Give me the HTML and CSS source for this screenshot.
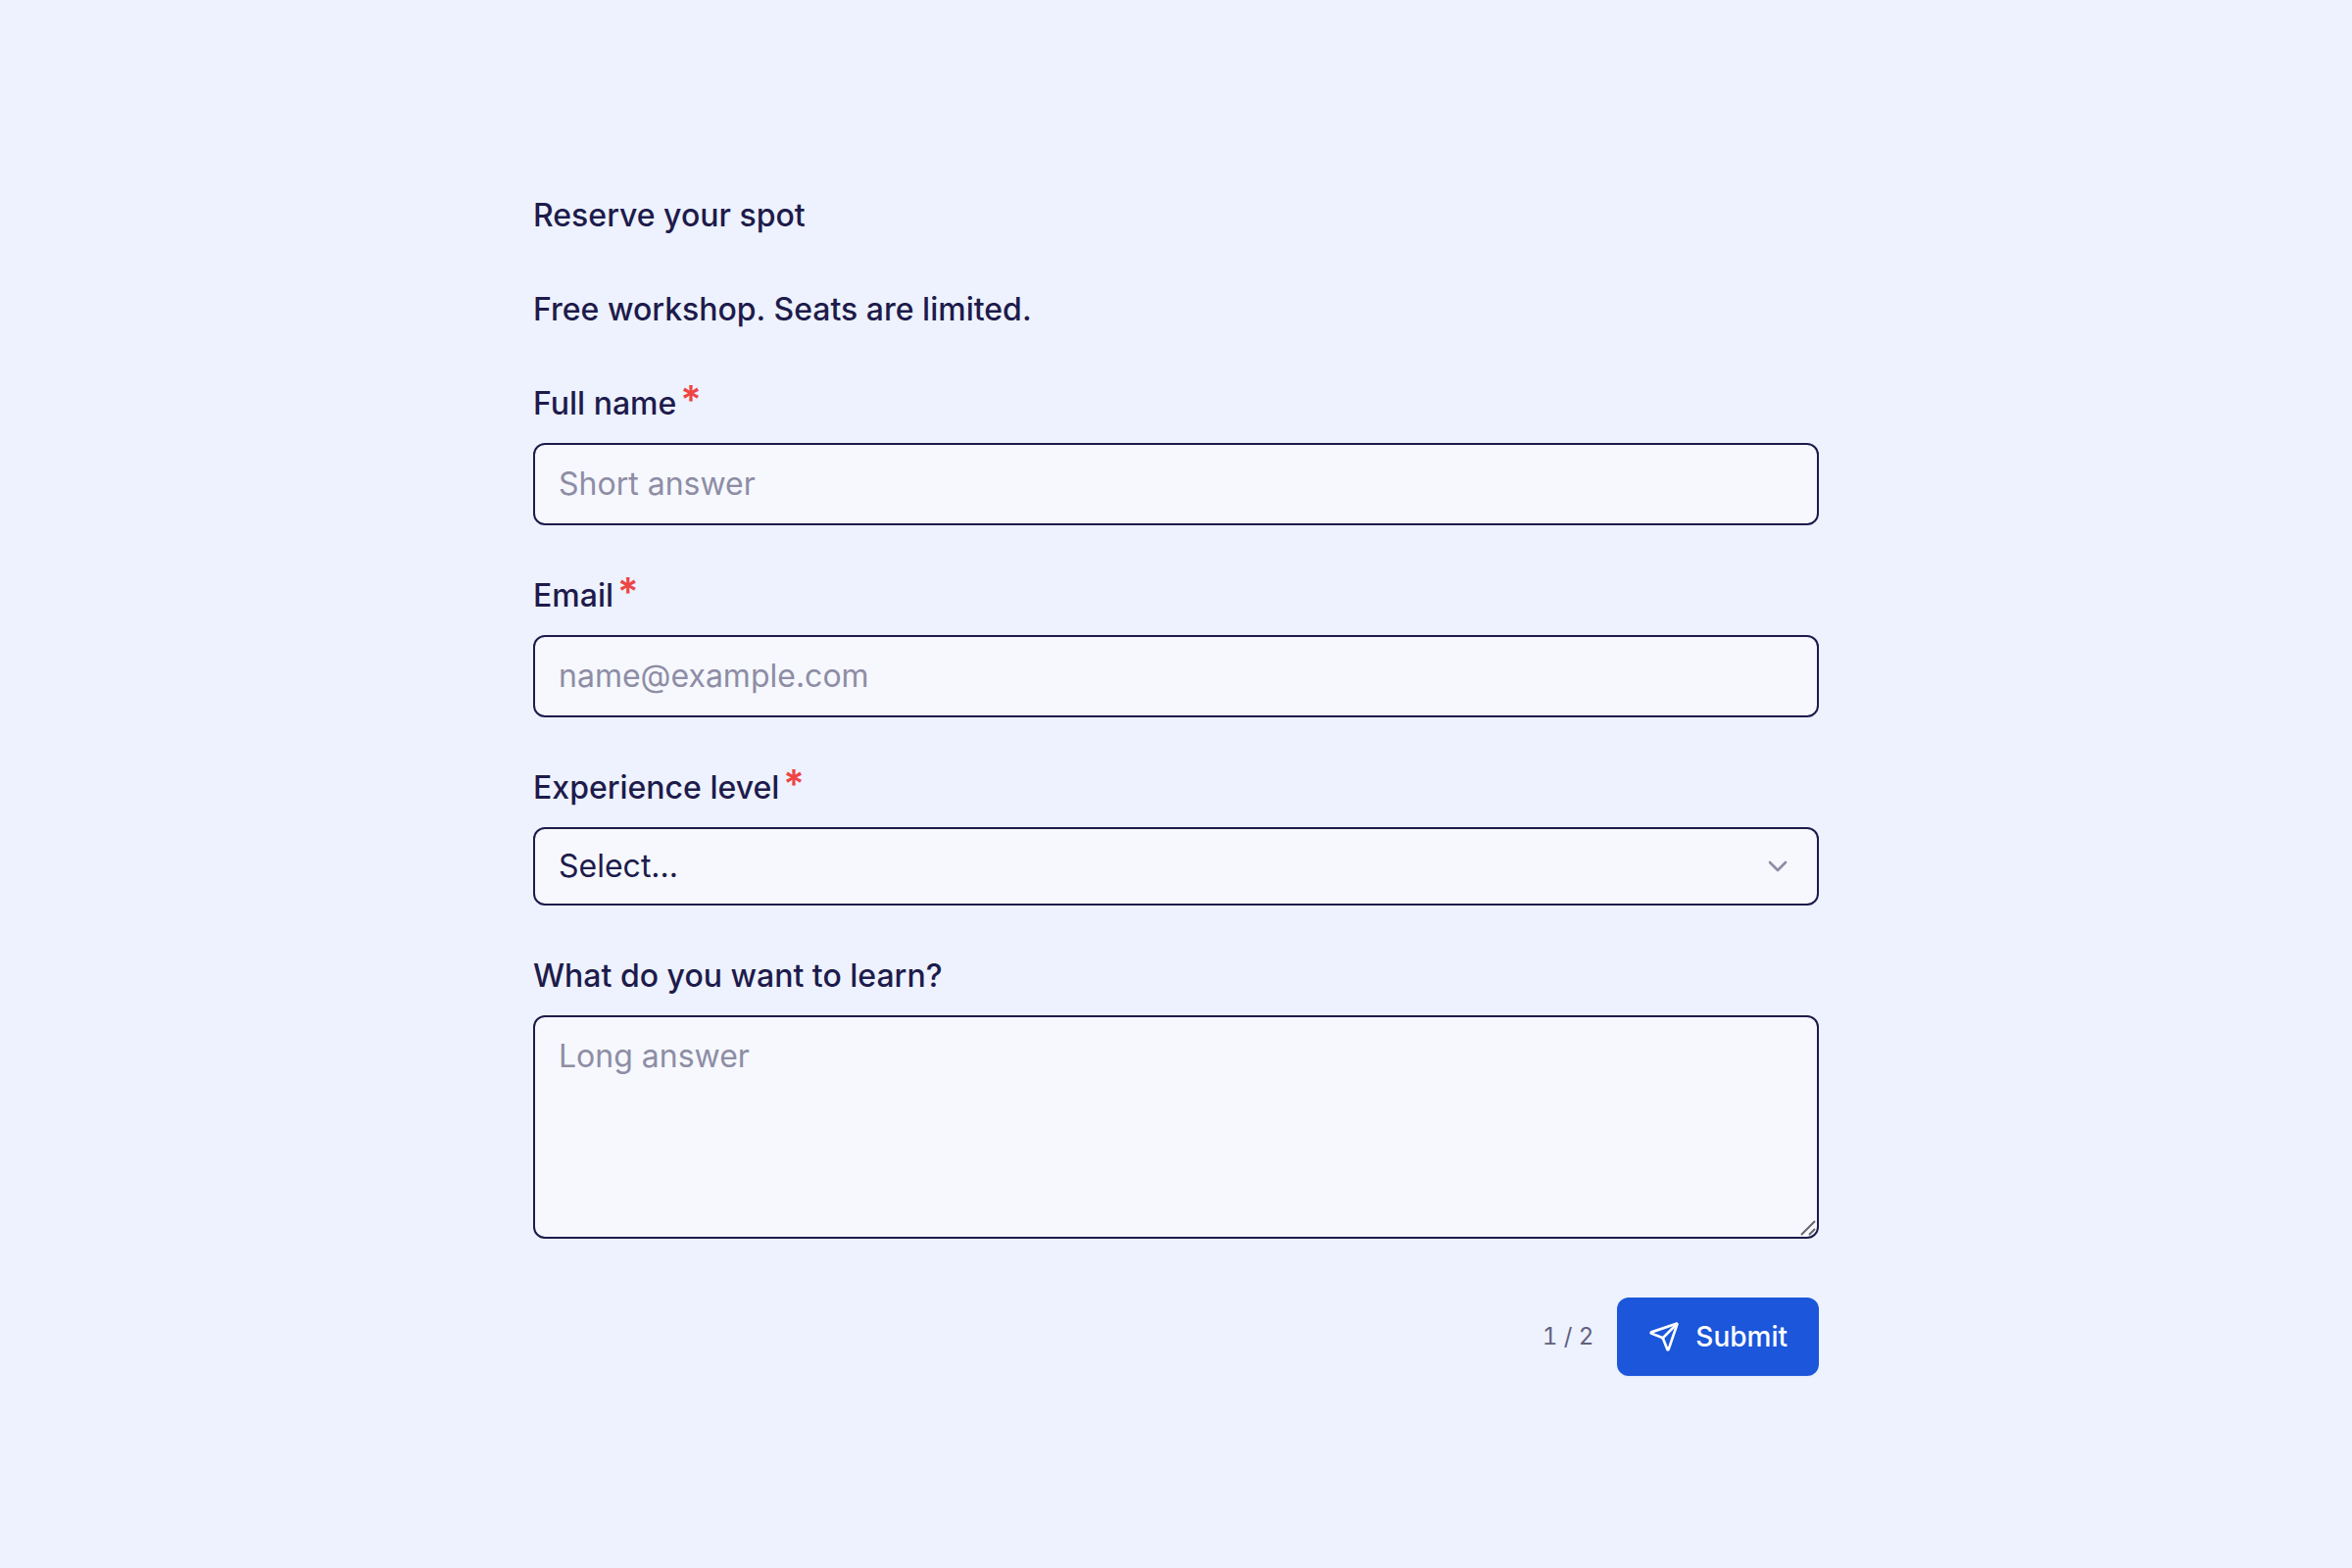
FILE: index.html
```html
<!DOCTYPE html>
<html lang="en">
<head>
<meta charset="utf-8">
<meta name="viewport" content="width=device-width, initial-scale=1">
<title>Reserve your spot</title>
<link rel="stylesheet" href="styles.css">
</head>
<body>
<main class="page">
  <form class="form">
    <h1 class="text">Reserve your spot</h1>
    <p class="text">Free workshop. Seats are limited.</p>
    <div class="field">
      <label class="label" for="name">Full name<span class="required">*</span></label>
      <input class="control" id="name" type="text" placeholder="Short answer" required>
    </div>
    <div class="field">
      <label class="label" for="email">Email<span class="required">*</span></label>
      <input class="control" id="email" type="email" placeholder="name@example.com" required>
    </div>
    <div class="field">
      <label class="label" for="level">Experience level<span class="required">*</span></label>
      <div class="control-wrap">
        <select class="control select" id="level" required>
          <option value="">Select...</option>
          <option>Beginner</option>
          <option>Intermediate</option>
          <option>Advanced</option>
        </select>
        <svg class="chevron" viewBox="0 0 24 24" aria-hidden="true"><path d="m6 9 6 6 6-6"/></svg>
      </div>
    </div>
    <div class="field">
      <label class="label" for="learn">What do you want to learn?</label>
      <div class="control-wrap">
        <textarea class="control textarea" id="learn" placeholder="Long answer"></textarea>
        <svg class="grip" viewBox="0 0 18 18" aria-hidden="true"><path d="M2 16 16 2M10 16l6-6"/></svg>
      </div>
    </div>
    <div class="actions">
      <span class="progress">1 / 2</span>
      <button class="submit" type="submit">
        <svg class="send" viewBox="0 0 24 24" aria-hidden="true"><path d="M14.536 21.686a.5.5 0 0 0 .937-.024l6.5-19a.496.496 0 0 0-.635-.635l-19 6.5a.5.5 0 0 0-.024.937l7.93 3.18a2 2 0 0 1 1.112 1.11z"/><path d="m21.854 2.147-10.94 10.939"/></svg>
        Submit
      </button>
    </div>
  </form>
</main>
</body>
</html>
```

FILE: styles.css
```css
*,
*::before,
*::after {
  box-sizing: border-box;
}

body {
  margin: 0;
  background: #edf2fe;
  color: #1e1b4b;
  font: 500 32px/48px Inter, "Liberation Sans", sans-serif;
}

.page {
  display: flex;
  align-items: center;
  justify-content: center;
  min-height: 100vh;
  padding: 48px;
}

.form {
  display: flex;
  flex-direction: column;
  gap: 48px;
  width: 100%;
  max-width: 1312px;
}

.text {
  margin: 0;
  font: inherit;
}

.field {
  display: flex;
  flex-direction: column;
  gap: 16px;
}

.label {
  display: flex;
  align-items: flex-start;
  gap: 4px;
}

.required {
  color: #ef4444;
  font-size: 40px;
  font-weight: 600;
  line-height: 40px;
}

.control {
  display: block;
  width: 100%;
  margin: 0;
  padding: 16px 24px;
  border: 2px solid #1e1b4b;
  border-radius: 12px;
  background: #f6f8fe;
  color: #1e1b4b;
  font: inherit;
  font-weight: 400;
  outline: none;
}

.control::placeholder {
  color: #8e8da5;
  opacity: 1;
}

.control-wrap {
  position: relative;
}

.select {
  height: 80px;
  padding-block: 14px;
  padding-right: 64px;
  appearance: none;
}

.chevron {
  position: absolute;
  top: 24px;
  right: 26px;
  width: 32px;
  height: 32px;
  fill: none;
  stroke: #8e8da5;
  stroke-width: 2;
  stroke-linecap: round;
  stroke-linejoin: round;
  pointer-events: none;
}

.textarea {
  height: 228px;
  resize: vertical;
}

.textarea::-webkit-resizer {
  background: transparent;
}

.grip {
  position: absolute;
  right: 2px;
  bottom: 2px;
  width: 18px;
  height: 18px;
  fill: none;
  stroke: #66666c;
  stroke-width: 2;
  pointer-events: none;
}

.actions {
  display: flex;
  align-items: center;
  justify-content: flex-end;
  gap: 24px;
  margin-top: 12px;
}

.progress {
  color: #62607f;
  font-size: 24px;
  font-weight: 400;
  font-variant-numeric: tabular-nums;
}

.submit {
  display: flex;
  align-items: center;
  gap: 16px;
  height: 80px;
  padding: 0 32px;
  border: 0;
  border-radius: 12px;
  background: #1b56db;
  color: #fff;
  font: inherit;
  font-size: 28px;
  box-shadow: 0 1px 2px rgb(0 0 0 / 5%);
}

.send {
  width: 32px;
  height: 32px;
  fill: none;
  stroke: currentColor;
  stroke-width: 2;
  stroke-linecap: round;
  stroke-linejoin: round;
}
```
